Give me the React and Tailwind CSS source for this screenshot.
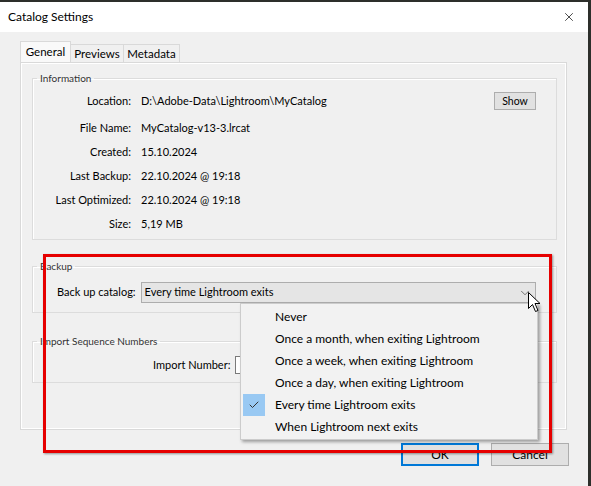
import { X, ChevronDown, Check } from "lucide-react";

const info = [
  { label: "Location:", value: "D:\\Adobe-Data\\Lightroom\\MyCatalog", show: true },
  { label: "File Name:", value: "MyCatalog-v13-3.lrcat" },
  { label: "Created:", value: "15.10.2024" },
  { label: "Last Backup:", value: "22.10.2024 @ 19:18" },
  { label: "Last Optimized:", value: "22.10.2024 @ 19:18" },
  { label: "Size:", value: "5,19 MB" },
];

const options = [
  "Never",
  "Once a month, when exiting Lightroom",
  "Once a week, when exiting Lightroom",
  "Once a day, when exiting Lightroom",
  "Every time Lightroom exits",
  "When Lightroom next exits",
];

function Group({ title, className, children }) {
  return (
    <fieldset
      className={`border border-[#dcdcdc] shadow-[inset_1px_1px_0_#fff] ${className}`}
    >
      <legend className="ml-[4px] px-[3px] text-[10px] leading-[14px] text-[#333]">
        {title}
      </legend>
      {children}
    </fieldset>
  );
}

export default function App() {
  return (
    <div className="relative w-[591px] h-[486px] overflow-hidden bg-[#2d2f2b] pt-[2px] pr-[3px] font-['Lato','Liberation_Sans',sans-serif] text-[12px] text-black">
      <div className="flex flex-col h-full">
        {/* Title bar */}
        <div className="h-[30px] bg-white flex items-center pl-[8px] pr-[12px]">
          <span className="text-[12px]">Catalog Settings</span>
          <X className="ml-auto w-[14px] h-[14px]" strokeWidth={1.2} />
        </div>

        <div className="flex-1 bg-[#f0f0f0] pt-[10px]">
          {/* Tabs */}
          <div className="ml-[20px] flex items-end h-[20px] text-[11.5px]">
            <div className="h-[21px] w-[51px] bg-[#f9f9f9] border border-b-0 border-[#d9d9d9] flex items-center justify-center relative z-10">
              General
            </div>
            <div className="h-[18px] w-[53px] border border-l-0 border-b-0 border-[#d9d9d9] flex items-center justify-center">
              Previews
            </div>
            <div className="h-[18px] w-[56px] border border-l-0 border-b-0 border-[#d9d9d9] flex items-center justify-center">
              Metadata
            </div>
          </div>

          {/* Panel */}
          <div className="ml-[20px] w-[547px] h-[368px] border border-[#d9d9d9] shadow-[inset_1px_1px_0_#fff,inset_-1px_-1px_0_#fff] pl-[11px] pr-[9px] pt-[8px] text-[11px]">
            <Group title="Information" className="pt-[4px] pb-[3px]">
              {info.map((row, i) => (
                <div
                  key={row.label}
                  className={`flex items-center h-[24px] ${i === 0 ? "mb-[3px]" : ""}`}
                >
                  <span className="w-[98px] text-right">{row.label}</span>
                  <span className="ml-[10px]">{row.value}</span>
                  {row.show && (
                    <button className="ml-auto mr-[20px] w-[42px] h-[18px] bg-[#e1e1e1] border border-[#adadad] text-[10.5px] leading-none">
                      Show
                    </button>
                  )}
                </div>
              ))}
            </Group>

            <Group title="Backup" className="mt-[19px] pt-[9px] pb-[9px]">
              <div className="flex items-center pl-[24px]">
                <span>Back up catalog:</span>
                <div className="ml-[5px] w-[395px] h-[21px] bg-[#e5e5e5] border border-[#adadad] flex items-center pl-[3px] pr-[3px]">
                  <span>Every time Lightroom exits</span>
                  <ChevronDown className="ml-auto w-[14px] h-[14px] text-[#444]" strokeWidth={1.2} />
                </div>
              </div>
            </Group>

            <Group title="Import Sequence Numbers" className="mt-[21px] pt-[8px] pb-[8px]">
              <div className="flex items-center pl-[120px]">
                <span>Import Number:</span>
                <div className="ml-[5px] w-[60px] h-[18px] bg-white border border-[#7a7a7a]" />
              </div>
            </Group>
          </div>

          {/* Buttons */}
          <div className="flex justify-end gap-[12px] pr-[19px] mt-[13px]">
            <button className="w-[78px] h-[23px] bg-[#e1e1e1] border-2 border-[#0078d7] leading-none">
              OK
            </button>
            <button className="w-[78px] h-[23px] bg-[#e1e1e1] border border-[#adadad] leading-none">
              Cancel
            </button>
          </div>
        </div>
      </div>

      {/* Open dropdown menu */}
      <div className="absolute left-[240px] top-[303px] w-[298px] h-[137px] bg-[#f2f2f2] border border-[#cccccc] shadow-[2px_2px_3px_rgba(0,0,0,0.35)] pt-[2px] pl-[1px]">
        {options.map((opt) => {
          const sel = opt === "Every time Lightroom exits";
          return (
            <div key={opt} className="flex items-center h-[22px]">
              <div
                className={`w-[22px] h-[22px] ml-[1px] flex items-center justify-center ${sel ? "bg-[#99c9f3]" : ""}`}
              >
                {sel && <Check className="w-[12px] h-[12px] text-[#333]" strokeWidth={2} />}
              </div>
              <span className="ml-[10px]">{opt}</span>
            </div>
          );
        })}
      </div>

      {/* Mouse cursor */}
      <svg
        className="absolute left-[528px] top-[292px]"
        width="13"
        height="21"
        viewBox="0 0 13 21"
      >
        <path
          d="M0.5 0.5 L0.5 16.5 L4.5 12.5 L7.5 19.5 L10 18.5 L7 11.5 L12 11.5 Z"
          fill="#fff"
          stroke="#000"
          strokeWidth="1"
          strokeLinejoin="round"
        />
      </svg>

      {/* Red annotation box */}
      <div className="absolute left-[43px] top-[254px] w-[509px] h-[199px] border-[3px] border-[#e60000] shadow-[1px_1px_2px_rgba(0,0,0,0.4)]" />
    </div>
  );
}
